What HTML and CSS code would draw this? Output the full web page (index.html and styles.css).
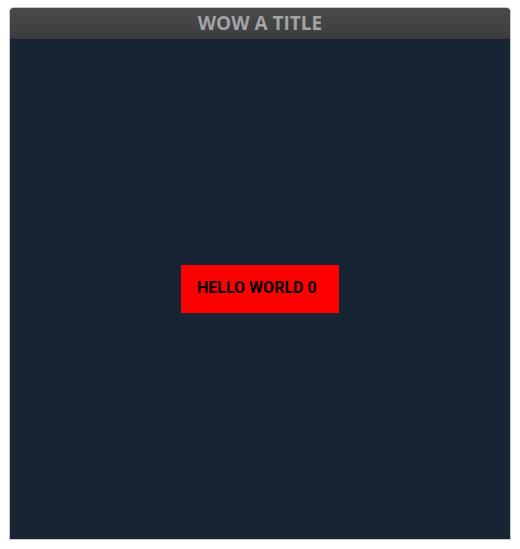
FILE: index.html
```html
<!DOCTYPE html>
<html>
<head>
<meta charset="utf-8">
<link rel="stylesheet" href="styles.css">
</head>
<body>
<div class="window">
  <div class="titlebar">WOW A TITLE</div>
  <div class="content">
    <div class="box">HELLO WORLD 0</div>
  </div>
</div>
</body>
</html>
```
FILE: styles.css
```css
html, body {
  margin: 0;
  padding: 0;
  background: #ffffff;
}
.window {
  margin: 7px 0 0 9px;
  width: 502px;
  height: 533px;
  box-sizing: border-box;
  border: 1px solid #c8c8c8;
  border-radius: 5px 5px 0 0;
  overflow: hidden;
  display: flex;
  flex-direction: column;
  background: #162433;
}
.titlebar {
  height: 31px;
  flex: none;
  background: linear-gradient(#4a4b4d, #3b3c3e);
  color: #a3a3a3;
  font-family: "Open Sans", sans-serif;
  font-weight: 700;
  font-size: 19px;
  line-height: 31px;
  text-align: center;
}
.content {
  flex: 1;
  display: flex;
  align-items: center;
  justify-content: center;
  background: #162433;
}
.box {
  width: 158px;
  height: 48px;
  box-sizing: border-box;
  padding: 0 0 3px 16px;
  background: #ff0000;
  color: #000000;
  font-family: Roboto, sans-serif;
  font-weight: 700;
  font-size: 16px;
  line-height: 45px;
  margin-bottom: 1px;
}
```
